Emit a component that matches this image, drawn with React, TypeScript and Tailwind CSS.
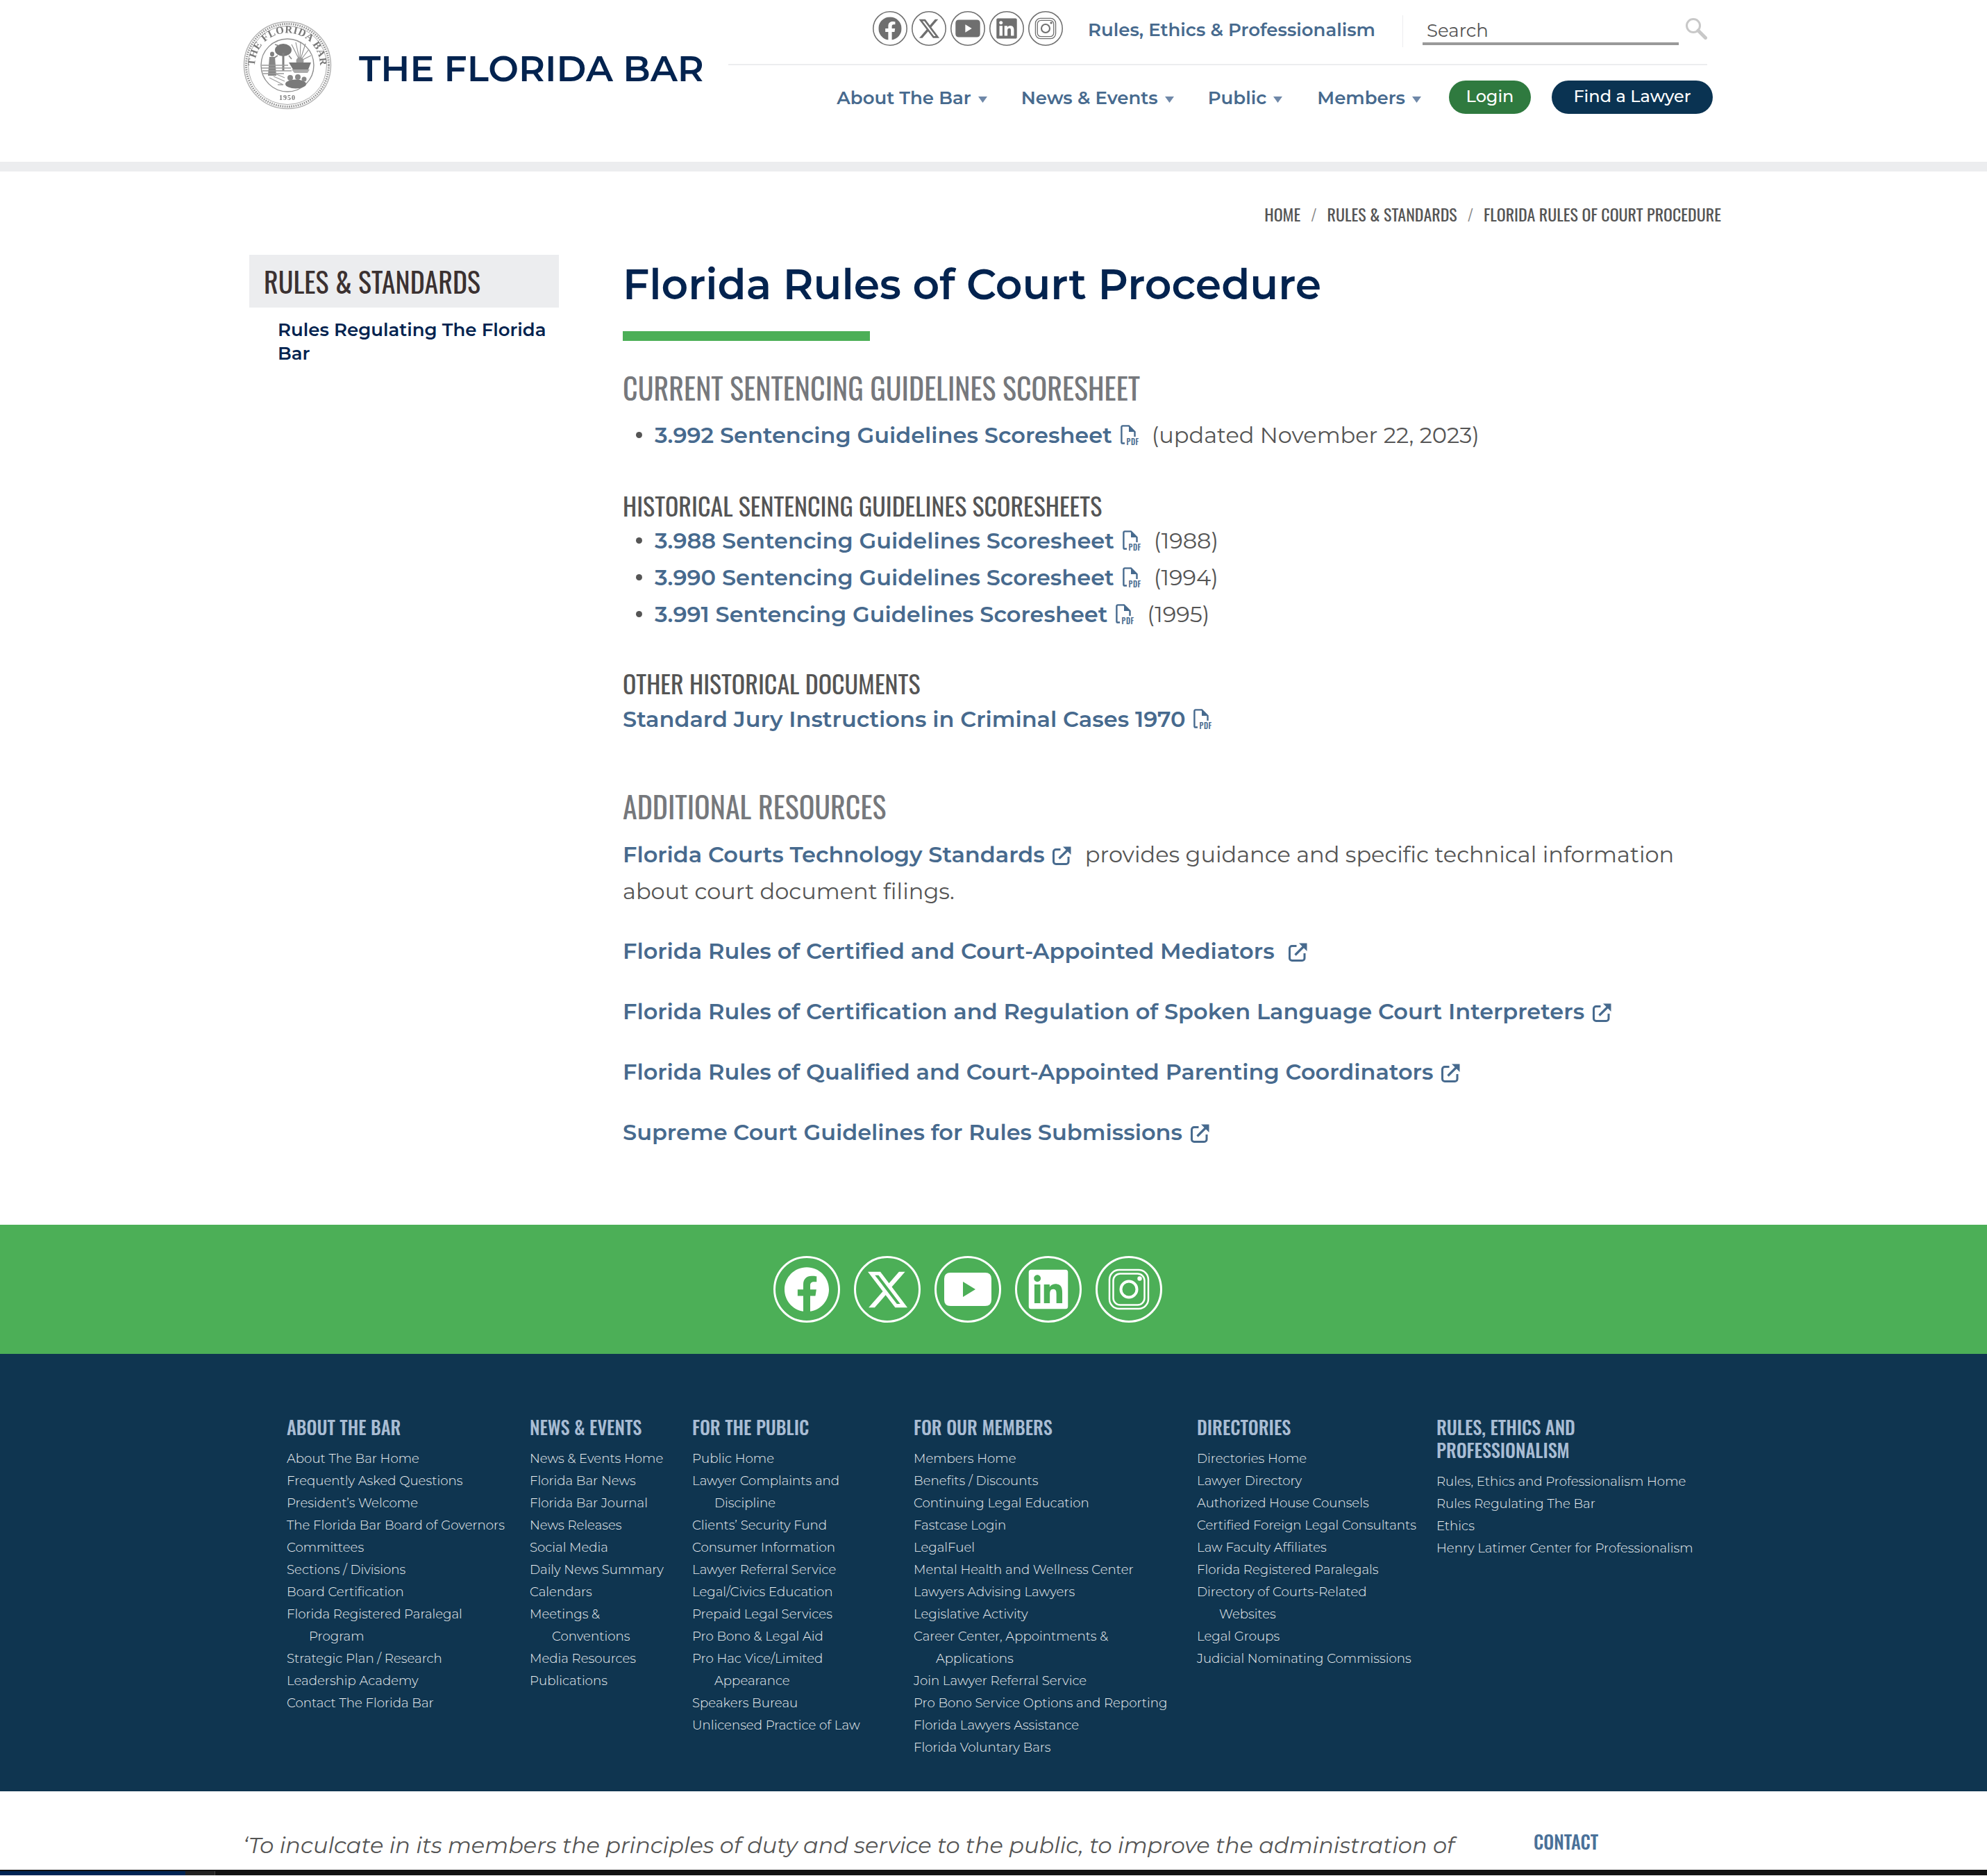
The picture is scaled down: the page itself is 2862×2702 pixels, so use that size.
import React from 'react'

type FooterColumn = {
  title: string[]
  width: string
  links: string[]
}

const footerColumns: FooterColumn[] = [
  {
    title: ['ABOUT THE BAR'],
    width: 'w-[350px]',
    links: [
      'About The Bar Home',
      'Frequently Asked Questions',
      'President’s Welcome',
      'The Florida Bar Board of Governors',
      'Committees',
      'Sections / Divisions',
      'Board Certification',
      'Florida Registered Paralegal\nProgram',
      'Strategic Plan / Research',
      'Leadership Academy',
      'Contact The Florida Bar',
    ],
  },
  {
    title: ['NEWS & EVENTS'],
    width: 'w-[234px]',
    links: [
      'News & Events Home',
      'Florida Bar News',
      'Florida Bar Journal',
      'News Releases',
      'Social Media',
      'Daily News Summary',
      'Calendars',
      'Meetings &\nConventions',
      'Media Resources',
      'Publications',
    ],
  },
  {
    title: ['FOR THE PUBLIC'],
    width: 'w-[319px]',
    links: [
      'Public Home',
      'Lawyer Complaints and\nDiscipline',
      'Clients’ Security Fund',
      'Consumer Information',
      'Lawyer Referral Service',
      'Legal/Civics Education',
      'Prepaid Legal Services',
      'Pro Bono & Legal Aid',
      'Pro Hac Vice/Limited\nAppearance',
      'Speakers Bureau',
      'Unlicensed Practice of Law',
    ],
  },
  {
    title: ['FOR OUR MEMBERS'],
    width: 'w-[408px]',
    links: [
      'Members Home',
      'Benefits / Discounts',
      'Continuing Legal Education',
      'Fastcase Login',
      'LegalFuel',
      'Mental Health and Wellness Center',
      'Lawyers Advising Lawyers',
      'Legislative Activity',
      'Career Center, Appointments &\nApplications',
      'Join Lawyer Referral Service',
      'Pro Bono Service Options and Reporting',
      'Florida Lawyers Assistance',
      'Florida Voluntary Bars',
    ],
  },
  {
    title: ['DIRECTORIES'],
    width: 'w-[345px]',
    links: [
      'Directories Home',
      'Lawyer Directory',
      'Authorized House Counsels',
      'Certified Foreign Legal Consultants',
      'Law Faculty Affiliates',
      'Florida Registered Paralegals',
      'Directory of Courts-Related\nWebsites',
      'Legal Groups',
      'Judicial Nominating Commissions',
    ],
  },
  {
    title: ['RULES, ETHICS AND', 'PROFESSIONALISM'],
    width: 'w-[400px]',
    links: [
      'Rules, Ethics and Professionalism Home',
      'Rules Regulating The Bar',
      'Ethics',
      'Henry Latimer Center for Professionalism',
    ],
  },
]

const SocialIcon = ({ name, className }: { name: string; className: string }) => (
  <svg viewBox="0 0 96 96" className={className} fill="currentColor">
    <circle cx="48" cy="48" r="46.5" fill="none" stroke="currentColor" strokeWidth="3" />
    {name === 'facebook' && (
      <svg x="16" y="16" width="64" height="64" viewBox="0 0 24 24">
        <path d="M24 12.073c0-6.627-5.373-12-12-12s-12 5.373-12 12c0 5.99 4.388 10.954 10.125 11.854v-8.385H7.078v-3.47h3.047V9.43c0-3.007 1.792-4.669 4.533-4.669 1.312 0 2.686.235 2.686.235v2.953H15.83c-1.491 0-1.956.925-1.956 1.874v2.25h3.328l-.532 3.47h-2.796v8.385C19.612 23.027 24 18.062 24 12.073z" />
      </svg>
    )}
    {name === 'x' && (
      <svg x="20" y="20" width="57" height="57" viewBox="0 0 24 24">
        <path
          fillRule="evenodd"
          d="M18.901 1.153h3.68l-8.04 9.19L24 22.846h-7.406l-5.8-7.584-6.638 7.584H.474l8.6-9.83L0 1.154h7.594l5.243 6.932ZM17.61 20.644h2.039L6.486 3.24H4.298Z"
        />
      </svg>
    )}
    {name === 'youtube' && (
      <path
        fillRule="evenodd"
        d="M23 24H73Q82 24 82 33V63Q82 72 73 72H23Q14 72 14 63V33Q14 24 23 24ZM41 37V59L59 48Z"
      />
    )}
    {name === 'linkedin' && (
      <svg x="19.5" y="19.5" width="57" height="57" viewBox="0 0 24 24">
        <path d="M20.447 20.452h-3.554v-5.569c0-1.328-.027-3.037-1.852-3.037-1.853 0-2.136 1.445-2.136 2.939v5.667H9.351V9h3.414v1.561h.046c.477-.9 1.637-1.85 3.37-1.85 3.601 0 4.267 2.37 4.267 5.455v6.286zM5.337 7.433c-1.144 0-2.063-.926-2.063-2.065 0-1.138.92-2.063 2.063-2.063 1.14 0 2.064.925 2.064 2.063 0 1.139-.925 2.065-2.064 2.065zm1.782 13.019H3.555V9h3.564v11.452zM22.225 0H1.771C.792 0 0 .774 0 1.729v20.542C0 23.227.792 24 1.771 24h20.451C23.2 24 24 23.227 24 22.271V1.729C24 .774 23.2 0 22.222 0h.003z" />
      </svg>
    )}
    {name === 'instagram' && (
      <g fill="none" stroke="currentColor">
        <rect x="20" y="20" width="56" height="56" rx="14" strokeWidth="2.5" />
        <rect x="25.5" y="25.5" width="45" height="45" rx="10" strokeWidth="2.5" />
        <circle cx="48" cy="48" r="11.5" strokeWidth="4" />
        <circle cx="63.5" cy="32.5" r="3.2" fill="currentColor" stroke="none" />
      </g>
    )}
  </svg>
)

const socialNames = ['facebook', 'x', 'youtube', 'linkedin', 'instagram']

const Seal = () => (
  <svg viewBox="0 0 128 128" className="h-[128px] w-[128px] shrink-0 blur-[0.5px]">
    <defs>
      <path id="seal-top" d="M 18 74 A 47 47 0 1 1 110 74" />
    </defs>
    <circle cx="64" cy="64" r="62.5" fill="none" stroke="#b4b4b4" strokeWidth="1.5" />
    <circle cx="64" cy="64" r="59.5" fill="none" stroke="#8f8f8f" strokeWidth="3" strokeDasharray="1.6 1.6" />
    <circle cx="64" cy="64" r="56.5" fill="none" stroke="#a8a8a8" strokeWidth="1" />
    <circle cx="64" cy="64" r="38" fill="none" stroke="#909090" strokeWidth="1.4" />
    <text fontFamily="'Liberation Serif', serif" fontSize="15" fontWeight="700" fill="#777" letterSpacing="0.6">
      <textPath href="#seal-top" startOffset="50%" textAnchor="middle">
        THE FLORIDA BAR
      </textPath>
    </text>
    <text x="64" y="114" textAnchor="middle" fontFamily="'Liberation Serif', serif" fontSize="10" fontWeight="700" fill="#777" letterSpacing="1">
      1950
    </text>
    {/* palm */}
    <ellipse cx="58" cy="42" rx="12" ry="9" fill="#777" />
    <path d="M50 50 44 54M66 50 70 55M52 36 46 34" stroke="#888" strokeWidth="1.6" />
    <rect x="56.500" y="46" width="3" height="26" fill="#808080" />
    {/* figure */}
    <ellipse cx="42" cy="48" rx="3" ry="3.400" fill="#808080" />
    <path d="M38 52h8l2 27h-12z" fill="#868686" />
    {/* sun rays and steamboat */}
    <g stroke="#8f8f8f" strokeWidth="1.100">
      <path d="M82 58 70 34M82 58 76 31M82 58 83 30M82 58 90 33M82 58 95 41M82 58 98 50" />
    </g>
    <circle cx="82" cy="58" r="5.500" fill="#999" />
    <path d="M66 60h32l-4 10H72z" fill="#777" />
    <path d="M70 70h26l-3 5H74z" fill="#aaa" />
    {/* water */}
    <g stroke="#9a9a9a" strokeWidth="1.300">
      <path d="M27 64h38M27 68h42M28 72h42M29 76h30" />
    </g>
    {/* flowers */}
    <ellipse cx="76" cy="91" rx="15" ry="6.500" fill="#7a7a7a" />
    <circle cx="68" cy="82" r="4" fill="#888" />
    <circle cx="79" cy="81" r="4" fill="#888" />
    <circle cx="88" cy="84" r="3.500" fill="#888" />
    <path d="M38 82 58 92M44 80 60 87M50 92h8M46 76l14 6" stroke="#a0a0a0" strokeWidth="1.300" />
  </svg>
)

const Caret = () => (
  <svg viewBox="0 0 13 9" className="mt-[5px] ml-[10px] h-[9px] w-[13px] fill-[#6f88a8]">
    <path d="M0 0h13L6.5 9z" />
  </svg>
)

const PdfIcon = () => (
  <svg viewBox="0 0 28 30" className="ml-3 inline-block h-[30px] w-[28px] shrink-0 overflow-visible text-[#476a8e]">
    <path
      d="M6 26.5H3a1.6 1.6 0 0 1-1.6-1.6V3a1.6 1.6 0 0 1 1.6-1.6h9l8.5 8.5v7"
      fill="none"
      stroke="currentColor"
      strokeWidth="2.4"
    />
    <path d="M12 1.5V10h8.5z" fill="currentColor" />
    <text x="8.5" y="29" fontFamily="'Oswald', sans-serif" fontSize="11" fontWeight="500" letterSpacing="0.6" fill="currentColor">
      PDF
    </text>
  </svg>
)

const ExternalIcon = ({ className }: { className: string }) => (
  <svg viewBox="0 0 27 27" className={`inline-block h-[27px] w-[27px] shrink-0 align-[-4px] text-[#476a8e] ${className}`}>
    <path
      d="M11.5 4.5H5a3.5 3.5 0 0 0-3.5 3.5v14A3.5 3.5 0 0 0 5 25.500h14.500a3.500 3.500 0 0 0 3.500-3.500V15"
      fill="none"
      stroke="currentColor"
      strokeWidth="3"
    />
    <path d="M9.500 17.500 23 4" fill="none" stroke="currentColor" strokeWidth="3.200" />
    <path d="M15 .5h11.500V12z" fill="currentColor" />
  </svg>
)

const Scoresheet = ({ name, note }: { name: string; note: string }) => (
  <li className="flex h-[53px] items-center">
    <span className="ml-[19px] mr-[18px] h-[9px] w-[9px] rounded-full bg-[#555]" />
    <a className="font-semibold text-[#476a8e]">{name}</a>
    <PdfIcon />
    <span className="ml-[17px] font-normal text-[#555]">{note}</span>
  </li>
)

const App = () => {
  return (
    <div className="h-[2702px] w-full overflow-hidden bg-white font-['Montserrat',sans-serif]">
      <header className="flex h-[233px] pl-[350px]">
        <div className="flex h-[160px] w-[699px] shrink-0 items-center pt-[28px]">
          <Seal />
          <div className="ml-[39px] mt-[9px] text-[52px] leading-none font-semibold whitespace-nowrap text-[#03234f]">
            THE FLORIDA BAR
          </div>
        </div>
        <div className="w-[1410px]">
          <div className="flex h-[94px] items-start justify-end border-b-2 border-[#ecedef] pt-[16px]">
            <div className="flex gap-[6px] text-[#6f6f6f]">
              {socialNames.map((name) => (
                <SocialIcon key={name} name={name} className="h-[50px] w-[50px]" />
              ))}
            </div>
            <a className="ml-[36px] h-[50px] text-[26px] leading-[54px] font-semibold whitespace-nowrap text-[#476a8e]">
              Rules, Ethics &amp; Professionalism
            </a>
            <div className="ml-[39px] mt-[6px] h-[46px] w-px bg-[#ecedef]" />
            <div className="ml-[28px] h-[49px] w-[369px] border-b-4 border-[#999] pl-[6px] pt-[10px] text-[26px] leading-[36px] text-[#555]">
              Search
            </div>
            <svg viewBox="0 0 32 32" className="mt-[9px] ml-[9px] h-[32px] w-[32px]">
              <circle cx="12" cy="12" r="9.5" fill="none" stroke="#c8c8c8" strokeWidth="3" />
              <path d="M19 19 29.500 29.500" stroke="#c8c8c8" strokeWidth="5" strokeLinecap="round" />
            </svg>
          </div>
          <nav className="-mr-[8px] mt-[22px] flex h-[48px] items-center justify-end text-[26px] font-semibold text-[#476a8e]">
            {[
              ['About The Bar', 'mr-[49px]'],
              ['News & Events', 'mr-[49px]'],
              ['Public', 'mr-[50px]'],
              ['Members', 'mr-[40px]'],
            ].map(([label, gap]) => (
              <a key={label} className={`flex items-center pt-[2px] whitespace-nowrap ${gap}`}>
                {label}
                <Caret />
              </a>
            ))}
            <a className="flex h-[48px] w-[118px] items-center justify-center rounded-full bg-[#2f7a3f] pb-[2px] text-[24px] font-medium text-white">
              Login
            </a>
            <a className="ml-[30px] flex h-[48px] w-[232px] items-center justify-center rounded-full bg-[#0a3352] pb-[2px] text-[24px] font-medium text-white">
              Find a Lawyer
            </a>
          </nav>
        </div>
      </header>

      <div className="h-[14px] bg-[#ecedef]" />

      <div className="flex h-[120px] items-start justify-end gap-[15px] pt-[42px] pr-[383px] font-['Oswald',sans-serif] text-[24px] leading-[38px] font-normal text-[#555]">
        <span>HOME</span>
        <span className="font-light text-[#888]">/</span>
        <span>RULES &amp; STANDARDS</span>
        <span className="font-light text-[#888]">/</span>
        <span>FLORIDA RULES OF COURT PROCEDURE</span>
      </div>

      <main className="flex pb-[107px] pl-[359px]">
        <aside className="w-[446px] shrink-0">
          <h3 className="flex h-[76px] items-center bg-[#ecedef] pl-[21px] font-['Oswald',sans-serif] text-[40px] font-normal text-[#3b3131]">
            RULES &amp; STANDARDS
          </h3>
          <a className="mt-[15px] block pr-[12px] pl-[41px] text-[26px] leading-[34px] font-semibold text-[#03234f]">
            Rules Regulating The Florida Bar
          </a>
        </aside>

        <section className="ml-[92px] w-[1550px] text-[32px]">
          <h1 className="mt-[3px] h-[80px] text-[60px] leading-[80px] font-semibold whitespace-nowrap text-[#03234f]">
            Florida Rules of Court Procedure
          </h1>
          <div className="mt-[27px] h-[14px] w-[356px] bg-[#4caf57]" />

          <h2 className="mt-[37px] h-[60px] font-['Oswald',sans-serif] text-[42px] leading-[60px] font-normal text-[#76787c]">
            CURRENT SENTENCING GUIDELINES SCORESHEET
          </h2>
          <ul className="mt-[12px]">
            <Scoresheet name="3.992 Sentencing Guidelines Scoresheet" note="(updated November 22, 2023)" />
          </ul>

          <h3 className="mt-[50px] h-[50px] font-['Oswald',sans-serif] text-[36px] leading-[50px] font-normal text-[#555]">
            HISTORICAL SENTENCING GUIDELINES SCORESHEETS
          </h3>
          <ul className="-mt-[1px]">
            <Scoresheet name="3.988 Sentencing Guidelines Scoresheet" note="(1988)" />
            <Scoresheet name="3.990 Sentencing Guidelines Scoresheet" note="(1994)" />
            <Scoresheet name="3.991 Sentencing Guidelines Scoresheet" note="(1995)" />
          </ul>

          <h3 className="mt-[48px] h-[50px] font-['Oswald',sans-serif] text-[36px] leading-[50px] font-normal text-[#555]">
            OTHER HISTORICAL DOCUMENTS
          </h3>
          <div className="flex h-[53px] items-center font-semibold text-[#476a8e]">
            Standard Jury Instructions in Criminal Cases 1970
            <PdfIcon />
          </div>

          <h2 className="mt-[69px] h-[60px] font-['Oswald',sans-serif] text-[42px] leading-[60px] font-normal text-[#76787c]">
            ADDITIONAL RESOURCES
          </h2>
          <p className="mt-[13px] leading-[53px] font-normal text-[#555]">
            <a className="font-semibold text-[#476a8e]">Florida Courts Technology Standards</a>
            <ExternalIcon className="mr-3 ml-[11px]" />
            <span className="ml-2">provides guidance and specific technical information about court document filings.</span>
          </p>
          <div className="mt-[34px] flex flex-col gap-[35px] leading-[52px] font-semibold text-[#476a8e]">
            <a>
              Florida Rules of Certified and Court-Appointed Mediators
              <ExternalIcon className="ml-5" />
            </a>
            <a>
              Florida Rules of Certification and Regulation of Spoken Language Court Interpreters
              <ExternalIcon className="ml-3" />
            </a>
            <a>
              Florida Rules of Qualified and Court-Appointed Parenting Coordinators
              <ExternalIcon className="ml-3" />
            </a>
            <a>
              Supreme Court Guidelines for Rules Submissions
              <ExternalIcon className="ml-3" />
            </a>
          </div>
        </section>
      </main>

      <div className="flex h-[186px] items-center gap-[20px] bg-[#4caf57] pl-[1114px] text-white">
        {socialNames.map((name) => (
          <SocialIcon key={name} name={name} className="h-[96px] w-[96px]" />
        ))}
      </div>

      <footer className="flex h-[630px] bg-[#0f3550] pt-[89px] pl-[413px]">
        {footerColumns.map((col) => (
          <div key={col.title[0]} className={`${col.width} shrink-0`}>
            <h4 className="mb-[13px] font-['Oswald',sans-serif] text-[26.5px] leading-[33px] font-medium text-[#a9bdd4]">
              {col.title.map((line) => (
                <div key={line}>{line}</div>
              ))}
            </h4>
            <ul className="text-[18.2px] leading-[32px] font-light text-[#eef1f3]">
              {col.links.map((link) => (
                <li key={link} className="pl-[32px] -indent-[32px] whitespace-pre-line">
                  {link}
                </li>
              ))}
            </ul>
          </div>
        ))}
      </footer>

      <div className="flex h-[113px] overflow-hidden pl-[350px]">
        <p className="mt-[54px] w-[1859px] shrink-0 text-[32px] leading-[48px] font-normal whitespace-nowrap text-[#555] italic">
          ‘To inculcate in its members the principles of duty and service to the public, to improve the administration of
        </p>
        <div className="mt-[50px] font-['Oswald',sans-serif] text-[26.5px] leading-[44px] font-medium text-[#4a7199]">
          CONTACT
        </div>
      </div>

      <div className="flex h-[8px] border-t-2 border-[#111]">
        <div className="w-[267px] bg-[#002454]" />
        <div className="w-[43px] border-r border-[#444] bg-[#222]" />
        <div className="flex-1 bg-[#111]" />
      </div>
    </div>
  )
}

export default App
